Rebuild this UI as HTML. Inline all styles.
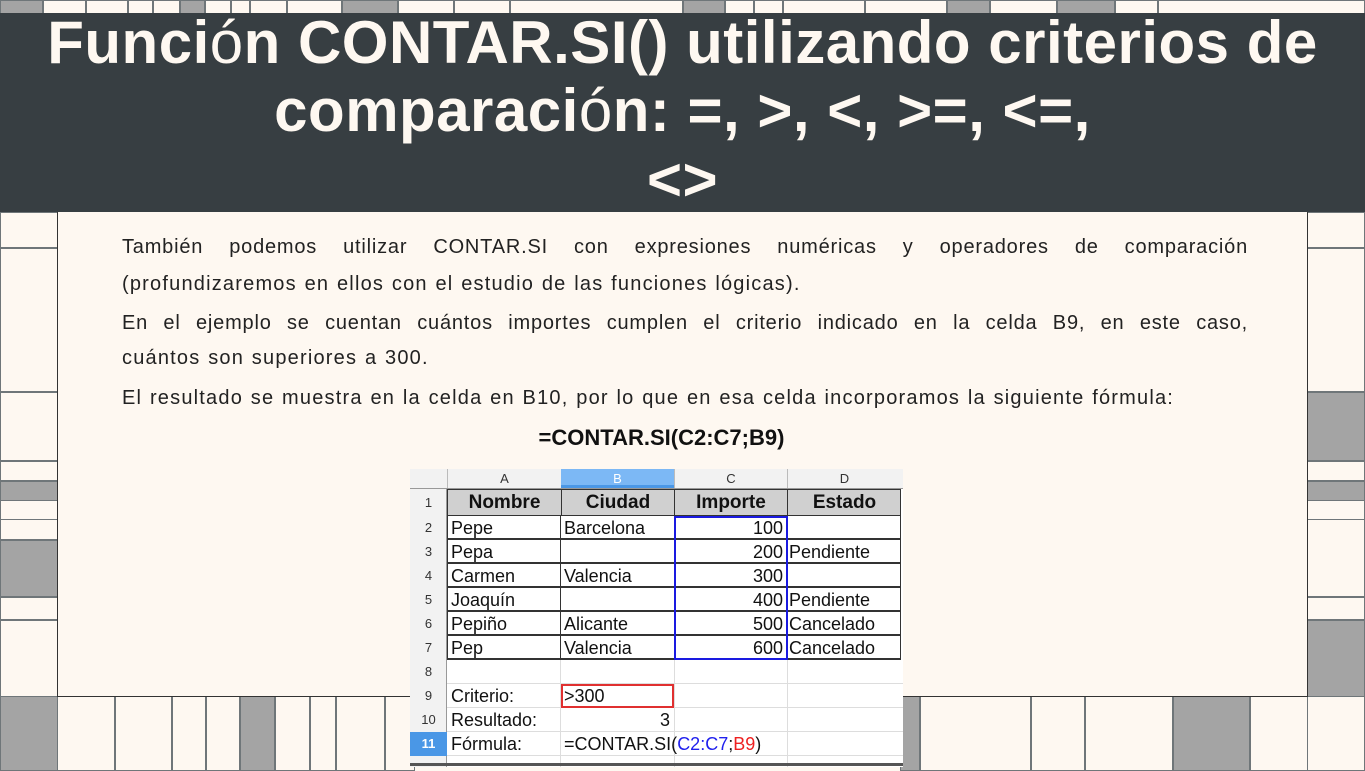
<!DOCTYPE html>
<html><head><meta charset="utf-8"><style>
*{margin:0;padding:0;box-sizing:border-box}
body{width:1365px;height:767px;overflow:hidden;background:#fef8f1;position:relative;font-family:"Liberation Sans",sans-serif}
.c{position:absolute;border:1px solid #6f7679;background:#fef8f1}
.g{background:#a4a4a4}
.hdr{position:absolute;left:0;top:13px;width:1365px;height:199px;background:#373e42}
.t{position:absolute;left:0;width:1365px;text-align:center;color:#fef8f1;font-weight:bold;font-size:60px;letter-spacing:0.5px;line-height:66px}
.t span{font-weight:normal}
.panel{position:absolute;left:57px;top:212px;width:1251px;height:485px;border:1px solid #333;border-top:none;background:#fef8f1}
.l{position:absolute;left:122px;width:1126px;font-size:20px;letter-spacing:1.2px;word-spacing:1px;color:#222;line-height:24px;white-space:nowrap}
.j{text-align:justify;text-align-last:justify;white-space:normal;letter-spacing:0.8px}
.sh{position:absolute;left:410px;top:469px;width:493px;height:298px;background:#fff;font-size:18px;color:#111}
.cell{position:absolute;top:0;height:100%;line-height:24px;padding:0 2px;white-space:nowrap;overflow:visible}
</style></head><body>
<!-- top strip -->
<div class="c g" style="left:0;top:0;width:43px;height:14px"></div>
<div class="c" style="left:43px;top:0;width:43px;height:14px"></div>
<div class="c" style="left:86px;top:0;width:42px;height:14px"></div>
<div class="c" style="left:128px;top:0;width:25px;height:14px"></div>
<div class="c" style="left:153px;top:0;width:27px;height:14px"></div>
<div class="c g" style="left:180px;top:0;width:25px;height:14px"></div>
<div class="c" style="left:205px;top:0;width:26px;height:14px"></div>
<div class="c" style="left:231px;top:0;width:19px;height:14px"></div>
<div class="c" style="left:250px;top:0;width:37px;height:14px"></div>
<div class="c" style="left:287px;top:0;width:55px;height:14px"></div>
<div class="c g" style="left:342px;top:0;width:56px;height:14px"></div>
<div class="c" style="left:398px;top:0;width:56px;height:14px"></div>
<div class="c" style="left:454px;top:0;width:56px;height:14px"></div>
<div class="c" style="left:510px;top:0;width:173px;height:14px"></div>
<div class="c g" style="left:683px;top:0;width:42px;height:14px"></div>
<div class="c" style="left:725px;top:0;width:29px;height:14px"></div>
<div class="c" style="left:754px;top:0;width:29px;height:14px"></div>
<div class="c" style="left:783px;top:0;width:82px;height:14px"></div>
<div class="c" style="left:865px;top:0;width:82px;height:14px"></div>
<div class="c g" style="left:947px;top:0;width:43px;height:14px"></div>
<div class="c" style="left:990px;top:0;width:67px;height:14px"></div>
<div class="c g" style="left:1057px;top:0;width:58px;height:14px"></div>
<div class="c" style="left:1115px;top:0;width:43px;height:14px"></div>
<div class="c" style="left:1158px;top:0;width:207px;height:14px"></div>
<!-- left strip -->
<div class="c" style="left:0;top:212px;width:58px;height:36px"></div>
<div class="c" style="left:0;top:248px;width:58px;height:144px"></div>
<div class="c" style="left:0;top:392px;width:58px;height:69px"></div>
<div class="c" style="left:0;top:461px;width:58px;height:20px"></div>
<div class="c g" style="left:0;top:481px;width:58px;height:20px"></div>
<div class="c" style="left:0;top:500px;width:58px;height:20px"></div>
<div class="c" style="left:0;top:519px;width:58px;height:21px"></div>
<div class="c g" style="left:0;top:540px;width:58px;height:57px"></div>
<div class="c" style="left:0;top:597px;width:58px;height:23px"></div>
<div class="c" style="left:0;top:620px;width:58px;height:77px"></div>
<!-- right strip -->
<div class="c" style="left:1307px;top:212px;width:58px;height:36px"></div>
<div class="c" style="left:1307px;top:248px;width:58px;height:144px"></div>
<div class="c g" style="left:1307px;top:392px;width:58px;height:69px"></div>
<div class="c" style="left:1307px;top:461px;width:58px;height:20px"></div>
<div class="c g" style="left:1307px;top:481px;width:58px;height:20px"></div>
<div class="c" style="left:1307px;top:500px;width:58px;height:20px"></div>
<div class="c" style="left:1307px;top:519px;width:58px;height:78px"></div>
<div class="c" style="left:1307px;top:597px;width:58px;height:23px"></div>
<div class="c g" style="left:1307px;top:620px;width:58px;height:77px"></div>
<!-- bottom strip -->
<div class="c g" style="left:0;top:696px;width:58px;height:75px"></div>
<div class="c" style="left:57px;top:696px;width:58px;height:75px"></div>
<div class="c" style="left:115px;top:696px;width:57px;height:75px"></div>
<div class="c" style="left:172px;top:696px;width:34px;height:75px"></div>
<div class="c" style="left:206px;top:696px;width:34px;height:75px"></div>
<div class="c g" style="left:240px;top:696px;width:35px;height:75px"></div>
<div class="c" style="left:275px;top:696px;width:35px;height:75px"></div>
<div class="c" style="left:310px;top:696px;width:26px;height:75px"></div>
<div class="c" style="left:336px;top:696px;width:49px;height:75px"></div>
<div class="c" style="left:385px;top:696px;width:30px;height:75px"></div>
<div class="c g" style="left:900px;top:696px;width:20px;height:75px"></div>
<div class="c" style="left:920px;top:696px;width:111px;height:75px"></div>
<div class="c" style="left:1031px;top:696px;width:54px;height:75px"></div>
<div class="c" style="left:1085px;top:696px;width:88px;height:75px"></div>
<div class="c g" style="left:1173px;top:696px;width:77px;height:75px"></div>
<div class="c" style="left:1250px;top:696px;width:58px;height:75px"></div>
<div class="c" style="left:1307px;top:696px;width:58px;height:75px"></div>

<div class="hdr"></div>
<div class="t" style="top:10px">Funci<span>ó</span>n CONTAR.SI() utilizando criterios de</div>
<div class="t" style="top:78px">comparaci<span>ó</span>n: =, &gt;, &lt;, &gt;=, &lt;=,</div>
<div class="t" style="top:147px">&lt;&gt;</div>

<div class="panel"></div>
<div class="l j" style="top:235px">También podemos utilizar CONTAR.SI con expresiones numéricas y operadores de comparación</div>
<div class="l" style="top:272px">(profundizaremos en ellos con el estudio de las funciones lógicas).</div>
<div class="l j" style="top:311px">En el ejemplo se cuentan cuántos importes cumplen el criterio indicado en la celda B9, en este caso,</div>
<div class="l" style="top:346px">cuántos son superiores a 300.</div>
<div class="l" style="top:386px">El resultado se muestra en la celda en B10, por lo que en esa celda incorporamos la siguiente fórmula:</div>
<div style="position:absolute;left:0;width:1323px;top:425px;text-align:center;font-weight:bold;font-size:22px;color:#111">=CONTAR.SI(C2:C7;B9)</div>

<div class="sh">
  <div style="position:absolute;left:0;top:0;width:493px;height:20px;background:#f2f2f2;border-bottom:1px solid #999;font-size:13px;color:#333">
    <div class="cell" style="left:37px;width:114px;text-align:center;line-height:20px;border-left:1px solid #bbb">A</div>
    <div class="cell" style="left:151px;width:113px;text-align:center;line-height:20px;background:#7cb8f5;color:#fff;border-bottom:3px solid #4a97e6">B</div>
    <div class="cell" style="left:264px;width:113px;text-align:center;line-height:20px;border-left:1px solid #bbb">C</div>
    <div class="cell" style="left:377px;width:114px;text-align:center;line-height:20px;border-left:1px solid #bbb">D</div>
  </div>
  <div style="position:absolute;left:0;top:20px;width:37px;height:278px;background:#f2f2f2;border-right:1px solid #999"></div>
  <div style="position:absolute;left:0;top:20px;width:37px;font-size:13px;color:#333;text-align:center;line-height:24px">
    <div style="height:27px;line-height:27px">1</div><div>2</div><div>3</div><div>4</div><div>5</div><div>6</div><div>7</div><div>8</div><div>9</div><div>10</div><div style="background:#4a97e6;color:#fff;font-weight:bold">11</div>
  </div>
  <div style="position:absolute;left:37px;top:20px;width:454px;height:27px;background:#d0d0d0;border:1px solid #333;font-weight:bold;font-size:19px">
    <div class="cell" style="left:0;width:113px;text-align:center;line-height:25px">Nombre</div>
    <div class="cell" style="left:113px;width:113px;text-align:center;line-height:25px;border-left:1px solid #333">Ciudad</div>
    <div class="cell" style="left:226px;width:113px;text-align:center;line-height:25px;border-left:1px solid #333">Importe</div>
    <div class="cell" style="left:339px;width:114px;text-align:center;line-height:25px;border-left:1px solid #333">Estado</div>
  </div>
  <div style="position:absolute;left:37px;top:47px;width:454px;height:144px;border:1px solid #333;border-top:none;background:repeating-linear-gradient(#fff 0 22px,#333 22px 24px)"></div>
  <div style="position:absolute;left:150px;top:47px;width:1px;height:144px;background:#333"></div>
  <div style="position:absolute;left:376px;top:47px;width:1px;height:144px;background:#333"></div>
  <div style="position:absolute;left:264px;top:47px;width:114px;height:144px;border:2px solid #1a1ae0"></div>
  <div style="position:absolute;left:150px;top:191px;width:1px;height:107px;background:#ddd"></div>
  <div style="position:absolute;left:264px;top:191px;width:1px;height:107px;background:#ddd"></div>
  <div style="position:absolute;left:377px;top:191px;width:1px;height:107px;background:#ddd"></div>
  <div style="position:absolute;left:37px;top:214px;width:456px;height:1px;background:#ddd"></div>
  <div style="position:absolute;left:37px;top:238px;width:456px;height:1px;background:#ddd"></div>
  <div style="position:absolute;left:37px;top:262px;width:456px;height:1px;background:#ddd"></div>
  <div style="position:absolute;left:37px;top:286px;width:456px;height:1px;background:#ddd"></div>
  <div style="position:absolute;left:0;top:294px;width:493px;height:3px;background:#555"></div>
  <div style="position:absolute;left:151px;top:215px;width:113px;height:24px;border:2px solid #e03030"></div>
  <div style="position:absolute;left:37px;top:47px;width:456px;font-size:18px;line-height:24px">
    <div style="position:relative;height:24px"><span class="cell" style="left:2px">Pepe</span><span class="cell" style="left:115px">Barcelona</span><span class="cell" style="left:226px;width:112px;text-align:right">100</span></div>
    <div style="position:relative;height:24px"><span class="cell" style="left:2px">Pepa</span><span class="cell" style="left:226px;width:112px;text-align:right">200</span><span class="cell" style="left:340px">Pendiente</span></div>
    <div style="position:relative;height:24px"><span class="cell" style="left:2px">Carmen</span><span class="cell" style="left:115px">Valencia</span><span class="cell" style="left:226px;width:112px;text-align:right">300</span></div>
    <div style="position:relative;height:24px"><span class="cell" style="left:2px">Joaquín</span><span class="cell" style="left:226px;width:112px;text-align:right">400</span><span class="cell" style="left:340px">Pendiente</span></div>
    <div style="position:relative;height:24px"><span class="cell" style="left:2px">Pepiño</span><span class="cell" style="left:115px">Alicante</span><span class="cell" style="left:226px;width:112px;text-align:right">500</span><span class="cell" style="left:340px">Cancelado</span></div>
    <div style="position:relative;height:24px"><span class="cell" style="left:2px">Pep</span><span class="cell" style="left:115px">Valencia</span><span class="cell" style="left:226px;width:112px;text-align:right">600</span><span class="cell" style="left:340px">Cancelado</span></div>
    <div style="position:relative;height:24px"></div>
    <div style="position:relative;height:24px"><span class="cell" style="left:2px">Criterio:</span><span class="cell" style="left:115px">&gt;300</span></div>
    <div style="position:relative;height:24px"><span class="cell" style="left:2px">Resultado:</span><span class="cell" style="left:113px;width:112px;text-align:right">3</span></div>
    <div style="position:relative;height:24px"><span class="cell" style="left:2px">Fórmula:</span><span class="cell" style="left:115px">=CONTAR.SI(<span style="color:#2020ee">C2:C7</span>;<span style="color:#ee2020">B9</span>)</span></div>
  </div>
</div>
</body></html>
